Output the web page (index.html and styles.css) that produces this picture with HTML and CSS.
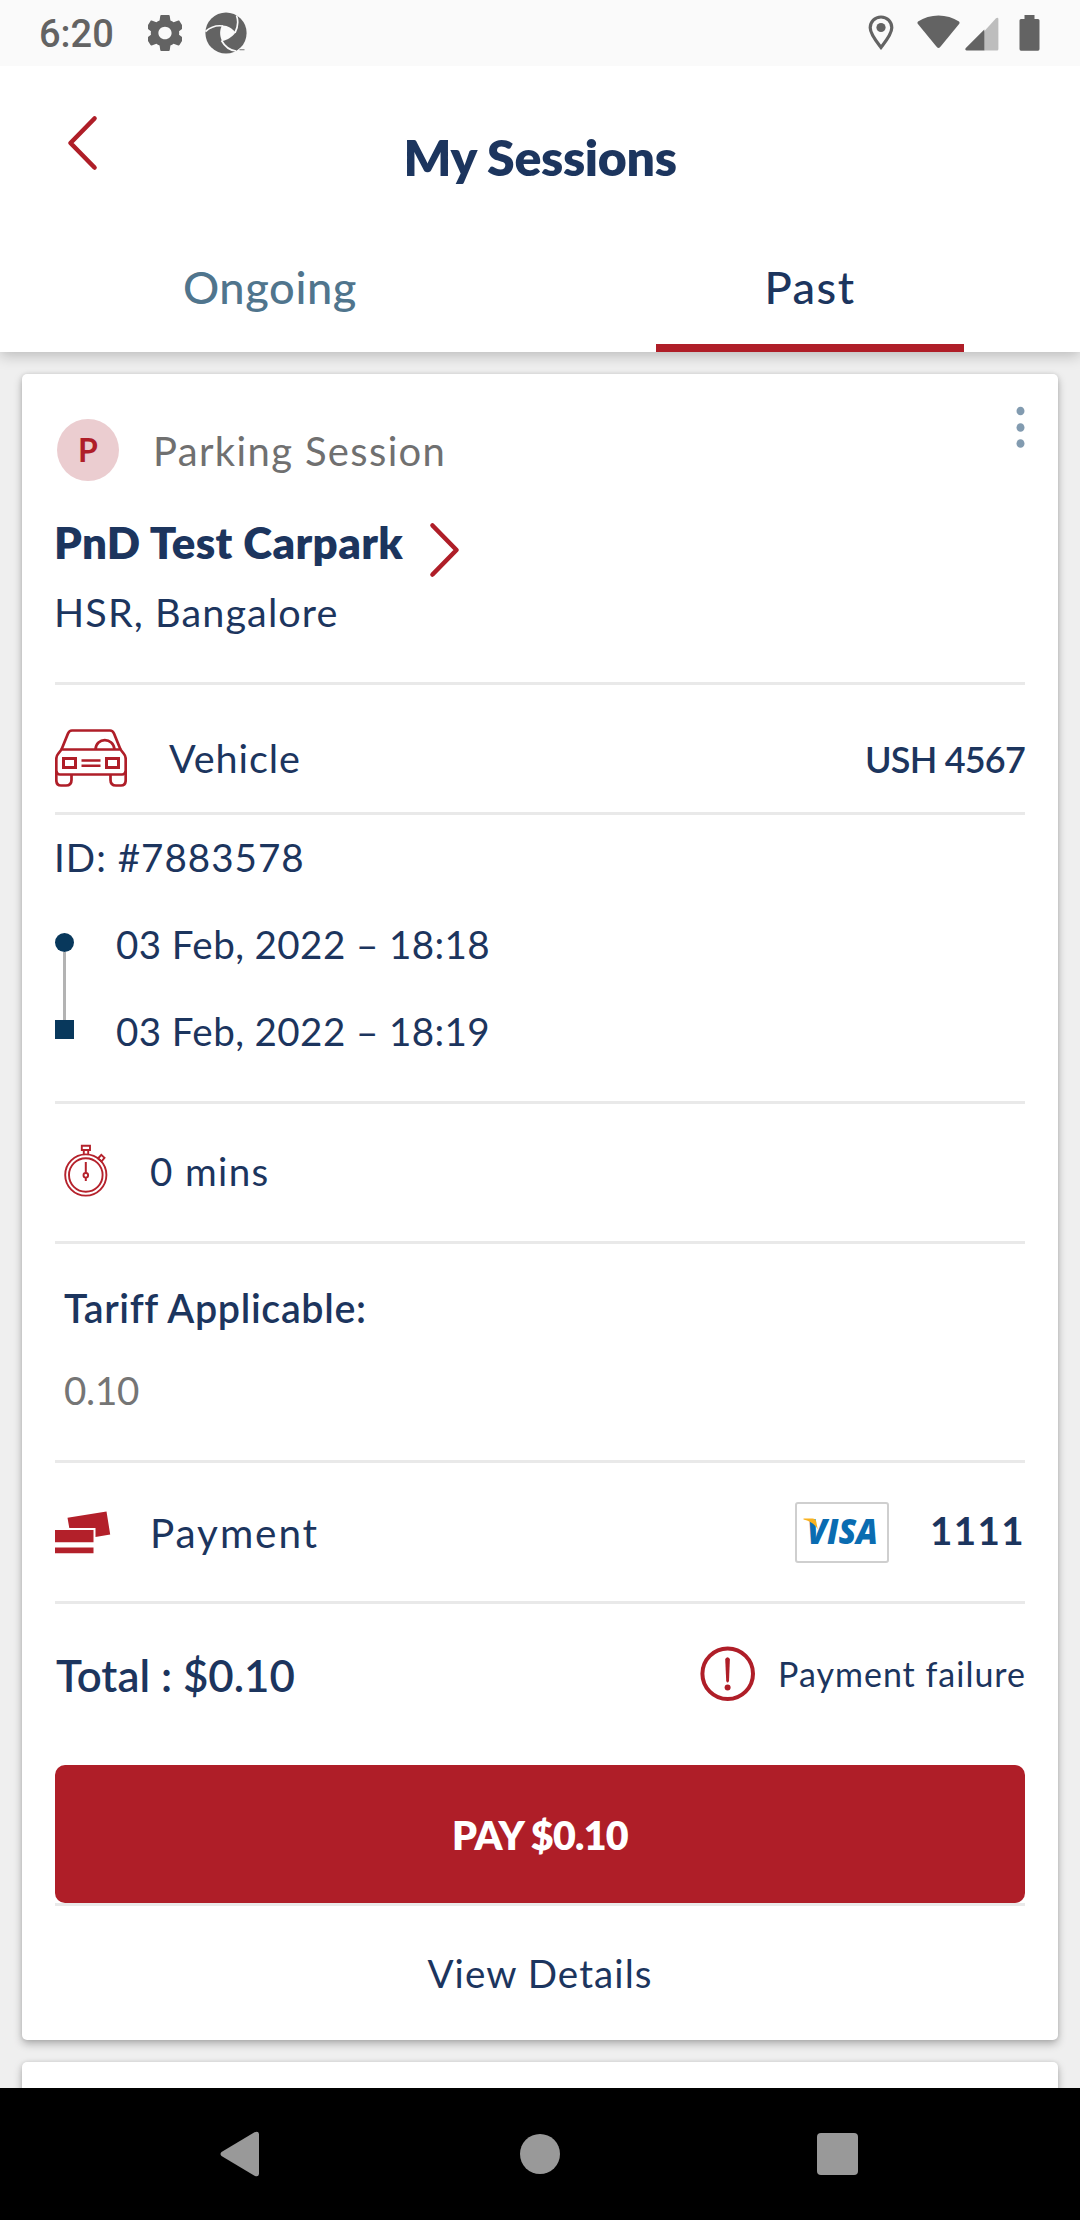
FILE: index.html
```html
<!DOCTYPE html>
<html lang="en">
<head>
<meta charset="utf-8">
<title>My Sessions</title>
<link rel="stylesheet" href="styles.css">
</head>
<body>
<div class="screen">
  <div class="statusbar">
    <span class="clock">6:20</span>
    <svg class="st-gear" width="34" height="36" viewBox="3 2 18 20" preserveAspectRatio="none"><path fill="#636363" d="M19.43 12.98c.04-.32.07-.64.07-.98s-.03-.66-.07-.98l2.11-1.65c.19-.15.24-.42.12-.64l-2-3.46c-.12-.22-.39-.3-.61-.22l-2.49 1c-.52-.4-1.08-.73-1.69-.98l-.38-2.65C14.46 2.18 14.25 2 14 2h-4c-.25 0-.46.18-.49.42l-.38 2.65c-.61.25-1.17.59-1.69.98l-2.49-1c-.23-.09-.49 0-.61.22l-2 3.46c-.13.22-.07.49.12.64l2.11 1.65c-.04.32-.07.65-.07.98s.03.66.07.98l-2.11 1.65c-.19.15-.24.42-.12.64l2 3.46c.12.22.39.3.61.22l2.49-1c.52.4 1.08.73 1.69.98l.38 2.65c.03.24.24.42.49.42h4c.25 0 .46-.18.49-.42l.38-2.65c.61-.25 1.17-.59 1.69-.98l2.49 1c.23.09.49 0 .61-.22l2-3.46c.12-.22.07-.49-.12-.64l-2.11-1.65zM12 15.5c-1.93 0-3.5-1.57-3.5-3.5s1.57-3.5 3.5-3.5 3.5 1.57 3.5 3.5-1.57 3.5-3.5 3.5z"/></svg>
    <svg class="st-swirl" width="42" height="42" viewBox="0 0 42 42"><circle cx="21" cy="21" r="20.6" fill="#636363"/><path fill="#fafafa" d="M17 13.5C22 13 27 16 30.500 20.500C27 25 22 28.500 17 29C14.500 24 14.500 18 17 13.500Z"/><path fill="none" stroke="#fafafa" stroke-width="1.700" d="M30 20.800C33 15 33.500 9 31.500 3.500M18 14C11.500 13 5 15.500 .5 19.500M16.500 28.500C19.500 34 24.500 38.300 31 39"/><path d="M34.500 37.700h5" stroke="#8a8a8a" stroke-width="1.200"/></svg>
    <span class="spacer"></span>
    <svg class="st-pin" width="26" height="36" viewBox="0 0 26 36"><path d="M13 2C6.800 2 2.200 6.700 2.200 12.800C2.200 19 8 26 13 32.500C18 26 23.800 19 23.800 12.800C23.800 6.700 19.200 2 13 2Z" fill="none" stroke="#636363" stroke-width="3.200"/><circle cx="13" cy="12.500" r="4.600" fill="#636363"/></svg>
    <svg class="st-wifi" width="43" height="34" viewBox="0 0 43 34"><path fill="#636363" d="M1 6.500C7 2.500 14 .5 21.500 .5S36 2.500 42 6.500Q43 7.500 42.300 8.800L23 32.200Q21.500 33.600 20 32.200L.7 8.800Q0 7.500 1 6.500Z"/></svg>
    <svg class="st-signal" width="34" height="34" viewBox="0 0 34 34"><path fill="#bdbdbd" d="M19 14.500L31 1.200Q33.200 0 33.400 2V32Q33.400 33.500 32 33.500H19Z"/><path fill="#636363" d="M19.300 12.500V33.500H1.500Q-.5 33 .8 31Z"/></svg>
    <svg class="st-battery" width="21" height="36" viewBox="0 0 21 36"><path fill="#636363" d="M5.500 0h10v4H19q1.500 0 1.500 1.500V34q0 1.700-1.500 1.700H2Q.5 35.700 .5 34V5.500Q.5 4 2 4H5.500Z"/></svg>
  </div>

  <header class="header">
    <div class="appbar">
      <svg class="back" width="32" height="56" viewBox="0 0 32 56"><path d="M27.500 3.500L3.500 28L27.500 52.500" fill="none" stroke="#af1e28" stroke-width="4.600" stroke-linecap="round" stroke-linejoin="round"/></svg>
      <h1>My Sessions</h1>
    </div>
    <nav class="tabs">
      <div class="tab"><span>Ongoing</span></div>
      <div class="tab active"><span class="past">Past</span><i></i></div>
    </nav>
  </header>

  <main class="list">
    <section class="card">
      <div class="type">
        <div class="badge">P</div>
        <span class="type-name">Parking Session</span>
        <svg class="kebab" width="9" height="42" viewBox="0 0 9 42"><g fill="#829bb0"><ellipse cx="4.500" cy="5" rx="4" ry="4.300"/><ellipse cx="4.500" cy="21.500" rx="4" ry="4.300"/><ellipse cx="4.500" cy="37.500" rx="4" ry="4.300"/></g></svg>
      </div>
      <div class="place">
        <h2>PnD Test Carpark</h2>
        <svg class="chev" width="32" height="56" viewBox="0 0 32 56"><path d="M3.500 3.500L27.500 28L3.500 52.500" fill="none" stroke="#af1e28" stroke-width="4.600" stroke-linecap="round" stroke-linejoin="round"/></svg>
      </div>
      <p class="address">HSR, Bangalore</p>

      <div class="row vehicle">
        <svg width="72" height="58" viewBox="0 0 72 58" fill="none" stroke="#af1e28" stroke-width="2.700"><path d="M6.500 20.500L13 4.500Q14.200 1.500 17 1.500H55Q57.800 1.500 59 4.500L65.500 20.500"/><path d="M6.500 20.500H65.500L69 25Q70.700 27 70.700 30V41Q70.700 45.500 67 45.500H5Q1.300 45.500 1.300 41V30Q1.300 27 3 25Z"/><path d="M40.500 20.500C41 8 58.500 8 59.500 20.500"/><path d="M1.300 42V51Q1.300 56.500 6 56.500H11Q16.500 56.500 16.500 51V45.500M70.700 42V51Q70.700 56.500 66 56.500H61Q55.500 56.500 55.500 51V45.500"/><path stroke-width="3" d="M8.500 29.500H20.500V38.500H8.500ZM51.500 29.500H63.500V38.500H51.500Z"/><path stroke-width="2.600" d="M26.500 31.500H45.500M26.500 36.800H45.500"/></svg>
        <span class="label">Vehicle</span>
        <b class="plate">USH 4567</b>
      </div>

      <div class="row times">
        <p class="sid">ID: #7883578</p>
        <div class="timeline">
          <div class="marks"><i class="dot"></i><i class="line"></i><i class="square"></i></div>
          <div class="dates"><p>03 Feb, 2022 – 18:18</p><p>03 Feb, 2022 – 18:19</p></div>
        </div>
      </div>

      <div class="row duration">
        <svg width="44" height="54" viewBox="0 0 44 54" fill="none" stroke="#b5222c" stroke-width="1.900"><circle cx="21.800" cy="31" r="20.600"/><circle cx="21.800" cy="31" r="16.800"/><path d="M17.800 1.800H26V6H17.800ZM19.800 6V10M24.200 6V10" /><path d="M34 14.500L37.300 10.800L40.500 13.800L37.500 17.500Z"/><circle cx="21.800" cy="31.300" r="2.300"/><path d="M21.800 18V29M21.800 33.500V37" stroke-width="2"/></svg>
        <span class="mins">0 mins</span>
      </div>

      <div class="row tariff">
        <h3>Tariff Applicable:</h3>
        <p>0.10</p>
      </div>

      <div class="row payment">
        <svg width="56" height="43" viewBox="0 0 56 43" fill="#b3202a"><path d="M12.500 6.800L51.500 .5L55.200 23.500L40.500 26V17H14.300Z"/><path d="M0 19H38.500V31.200H0ZM0 36.500H38.500V42.300H0Z"/></svg>
        <span class="label">Payment</span>
        <div class="visa">
          <svg width="94" height="61" viewBox="0 0 94 61"><text class="visa-word" x="12" y="41.500" textLength="71" lengthAdjust="spacingAndGlyphs">VISA</text><path fill="#f9b21f" d="M8.500 16.500H17.500Q20.500 16.700 21.200 19.500L22.800 27.500Q18.500 19.500 8.500 17.500Z"/></svg>
        </div>
        <b class="last4">1111</b>
      </div>

      <div class="row total">
        <b class="sum">Total : $0.10</b>
        <svg width="56" height="56" viewBox="0 0 56 56"><circle cx="27.700" cy="27.700" r="25.300" fill="none" stroke="#af1e28" stroke-width="4"/><path d="M25.200 13Q27.500 9.500 29.900 13L29 35Q27.500 38 26.200 35Z" fill="#af1e28"/><circle cx="27.600" cy="41.500" r="3" fill="#af1e28"/></svg>
        <span class="fail">Payment failure</span>
      </div>

      <div class="pay">PAY $0.10</div>
      <div class="row details">View Details</div>
    </section>
    <section class="card next"></section>
  </main>

  <div class="navbar">
    <svg width="40" height="46" viewBox="0 0 40 46"><path fill="#999" d="M1.500 21L34.500 1.300Q38.500 -.5 39 3V43Q38.500 46.500 34.500 44.700L1.500 25Q-.5 23 1.500 21Z"/></svg>
    <i class="home"></i>
    <i class="recents"></i>
  </div>
</div>
</body>
</html>
```
FILE: styles.css
```css
* { box-sizing: border-box; margin: 0; padding: 0; }
body { background: #efefef; font-family: Lato, "Open Sans", sans-serif; color: #1c355e; }
h1, h2, h3, p { white-space: nowrap; }
i { display: block; }
svg { display: block; flex: none; }
span, b { white-space: nowrap; }

.screen { width: 1080px; height: 2220px; display: flex; flex-direction: column; overflow: hidden; }

/* status bar */
.statusbar { height: 66px; flex: none; background: #fafafa; display: flex; align-items: flex-start; padding: 0 40px 0 39px; }
.clock { width: 109px; font: 500 38px/69px Roboto, sans-serif; color: #636363; }
.st-gear { margin-top: 15px; }
.st-swirl { margin: 12px 0 0 23px; }
.spacer { flex: 1; }
.st-pin { margin: 15px 23px 0 0; }
.st-wifi { margin: 15px 5px 0 0; }
.st-signal { margin: 17px 20px 0 0; }
.st-battery { margin-top: 15px; }

/* header */
.header { height: 286px; flex: none; background: #fff; box-shadow: 0 3px 14px rgba(0, 0, 0, .24); clip-path: inset(0 0 -24px 0); position: relative; z-index: 1; }
.appbar { height: 170px; display: grid; grid-template-columns: 130px 1fr 130px; align-items: start; }
.back { margin: 49px 0 0 67px; }
h1 { margin-top: 61px; text-align: center; font-size: 50px; line-height: 60px; font-weight: 800; letter-spacing: -.36px; }
.tabs { height: 116px; display: flex; }
.tab { flex: 1; display: flex; flex-direction: column; align-items: center; justify-content: space-between; font-size: 45.200px; line-height: 102px; font-weight: 500; color: #50758d; letter-spacing: .6px; }
.tab.active { color: #1c355e; }
.past { letter-spacing: 1.400px; }
.tab i { width: 308px; height: 8px; background: #af1e28; }

/* session card */
.list { flex: 1; min-height: 0; overflow: hidden; padding: 22px 22px 0; display: flex; flex-direction: column; gap: 22px; }
.card { flex: none; height: 1666px; padding: 32px 33px 0; background: #fff; border-radius: 5px; box-shadow: 0 4px 9px rgba(0, 0, 0, .27), 0 0 4px rgba(0, 0, 0, .1); font-size: 38.600px; line-height: 54px; }
.card.next { height: 200px; }
.type { height: 75px; display: flex; align-items: flex-end; color: #707070; }
.badge { width: 62px; height: 62px; margin-left: 2px; border-radius: 50%; background: #ebcdd0; color: #af1e28; font-weight: 700; font-size: 32px; line-height: 62px; text-align: center; }
.type-name { flex: 1; margin-left: 34px; line-height: 62px; height: 61px; font-size: 40px; letter-spacing: 1.350px; }
.kebab { align-self: flex-start; }
.place { height: 104px; display: flex; align-items: flex-start; }
h2 { margin-top: 34px; width: 348px; font-size: 43.800px; line-height: 54px; font-weight: 800; letter-spacing: .4px; margin-left: -1px; }
.chev { margin: 41px 0 0 27px; }
.address { height: 97px; font-size: 39.600px; letter-spacing: 1.100px; margin-left: -1px; }

.row { display: flex; align-items: center; border-top: 3px solid #e9e9e9; }
.vehicle { height: 130px; padding-top: 18px; }
.vehicle .label { margin-left: 42px; font-size: 39.600px; letter-spacing: .9px; flex: 1; }
.plate { font-size: 36px; font-weight: 600; letter-spacing: -.8px; padding-top: 3px; }
.times { height: 289px; flex-direction: column; align-items: flex-start; padding-top: 15px; }
.sid { letter-spacing: 1px; margin-left: -1px; }
.timeline { display: flex; margin-top: 17px; }
.marks { width: 19px; display: flex; flex-direction: column; align-items: center; padding-top: 32px; }
.dot { width: 19px; height: 19px; border-radius: 50%; background: #08385c; }
.line { width: 3px; height: 68px; background: #b3b3b3; }
.square { width: 19px; height: 19px; background: #08385c; }
.dates { margin-left: 42px; line-height: 87px; letter-spacing: .4px; }
.duration { height: 140px; padding: 0 0 3px 9px; }
.mins { margin-left: 42px; letter-spacing: 1.360px; }
.tariff { height: 219px; flex-direction: column; align-items: flex-start; padding: 37px 0 0 9px; gap: 28px; }
h3 { font-size: 39.400px; font-weight: 600; letter-spacing: .650px; }
.tariff p { color: #757575; letter-spacing: -.3px; }
.payment { height: 141px; }
.payment .label { flex: 1; margin-left: 39px; padding-top: 2px; font-size: 40.500px; letter-spacing: 1.900px; }
.visa { width: 94px; height: 61px; border: 2px solid #cfcfcf; border-radius: 3px; }
.visa svg { margin: -2px; }
.visa-word { font: italic 800 34.500px "Open Sans", sans-serif; fill: #0a6cb1; }
.last4 { margin: -5px 0 0 41px; font-weight: 700; letter-spacing: 1.400px; }
.total { height: 164px; padding-bottom: 22px; }
.sum { flex: 1; margin-left: 1px; padding-top: 2px; font-size: 43.800px; font-weight: 600; letter-spacing: 0; }
.fail { margin: 0 -1px 0 22px; font-size: 34px; letter-spacing: 1.000px; }
.pay { height: 138px; border-radius: 10px; background: #af1e28; color: #fff; font-size: 39.400px; line-height: 139px; font-weight: 800; letter-spacing: -.75px; text-align: center; }
.details { height: 137px; justify-content: center; letter-spacing: 1.070px; }

/* system navigation */
.navbar { height: 132px; flex: none; background: #000; display: flex; align-items: center; padding: 0 222px 0 220px; justify-content: space-between; position: relative; z-index: 1; }
.home { width: 40px; height: 40px; margin-left: 2px; border-radius: 50%; background: #999; }
.recents { width: 41px; height: 42px; border-radius: 4px; background: #999; }
```
